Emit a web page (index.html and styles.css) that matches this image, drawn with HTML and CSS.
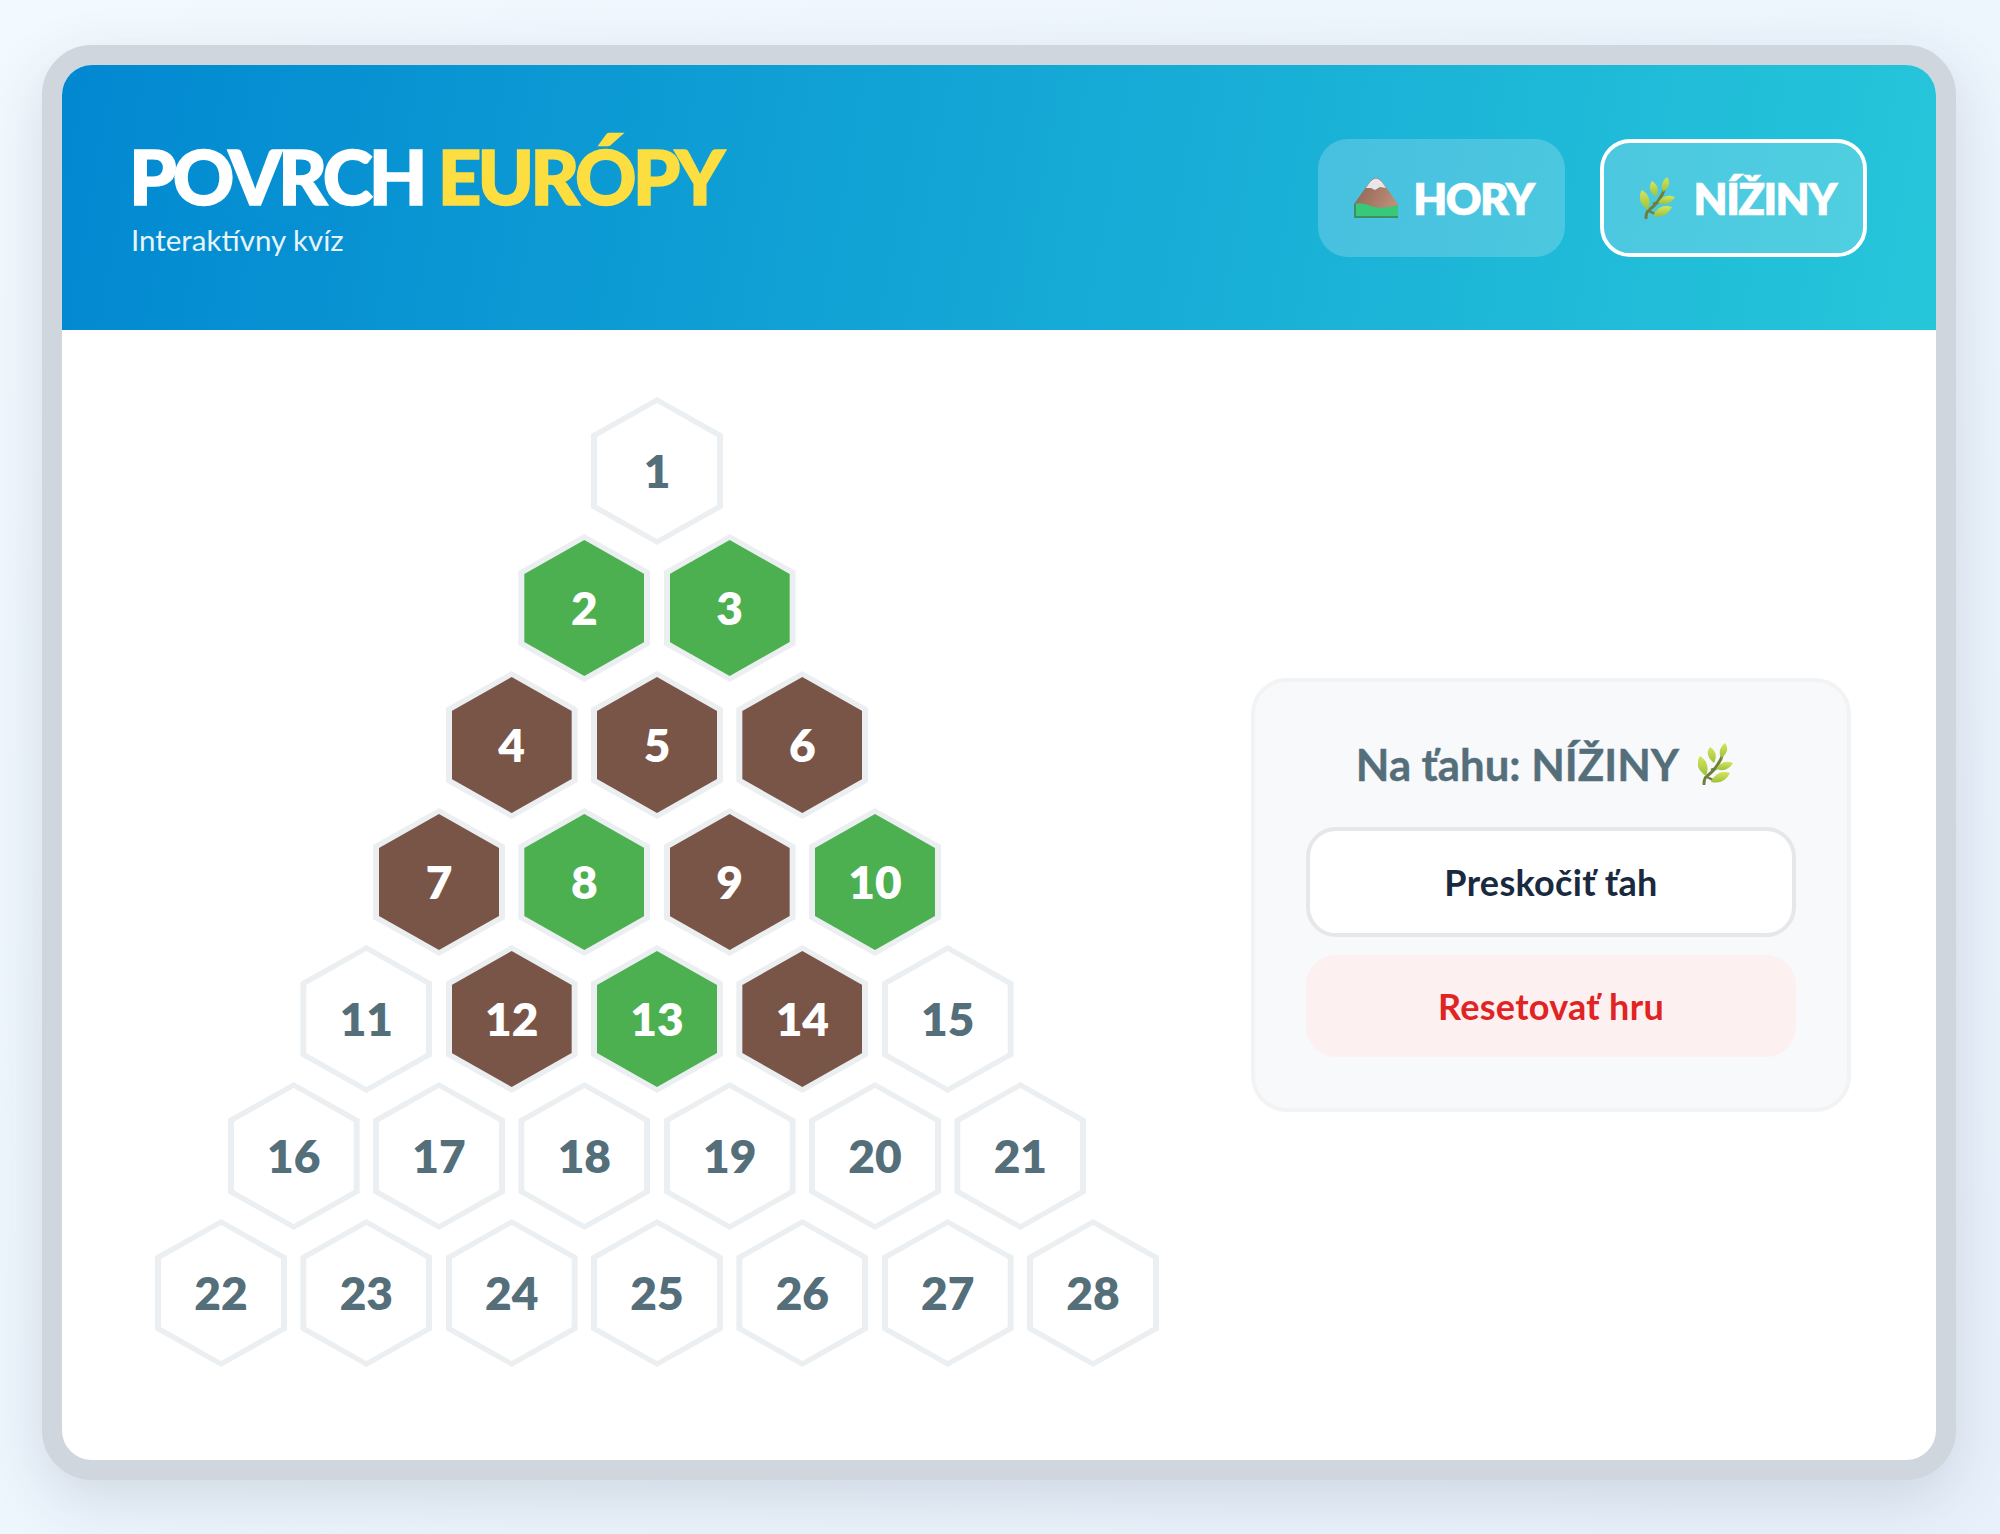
FILE: index.html
```html
<!DOCTYPE html>
<html lang="sk">
<head>
    <meta charset="UTF-8">
    <meta name="viewport" content="width=device-width, initial-scale=1.0">
    <title>Povrch Európy</title>
    <link rel="stylesheet" href="styles.css">
</head>
<body>
    <svg class="icon-defs" width="0" height="0" aria-hidden="true">
        <defs>
            <linearGradient id="rock" x1="0" y1="0" x2="1" y2="0.4">
                <stop offset="0" stop-color="#8a6250"/>
                <stop offset="1" stop-color="#bd8d78"/>
            </linearGradient>
            <linearGradient id="leaf" x1="0" y1="0" x2="0" y2="1">
                <stop offset="0" stop-color="#d6e45c"/>
                <stop offset="1" stop-color="#9cc23e"/>
            </linearGradient>
            <symbol id="mountain" viewBox="0 0 44 42">
                <path d="M0 27 L15 6 Q22 -4 29 6 L44 27 V41 H0 Z" fill="url(#rock)"/>
                <path d="M14 8 Q22 -5 30 8 L32 11 L26 10 L21 13 L17 11 L12 11 Z" fill="#e9e6e9"/>
                <path d="M0 27 Q8 25 17 29 T44 28 V41 H0 Z" fill="#37c879"/>
                <path d="M0 27 V41 H44 V39 H2 V27 Z" fill="#3f8f64"/>
            </symbol>
            <symbol id="sprig" viewBox="0 0 36 42">
                <path d="M6 41 Q6 35 9 33 Q17 27 20 21 Q23 17 24 13" fill="none" stroke="#6f7f3a" stroke-width="3" stroke-linecap="round"/>
                <path d="M13 27 L19 25 M9 34 L15 37" fill="none" stroke="#6f7f3a" stroke-width="2.4"/>
                <path d="M8 33 Q-5 24 2 13 Q13 20 8 33 Z" fill="url(#leaf)"/>
                <path d="M16 20 Q6 12 12 4 Q21 10 16 20 Z" fill="url(#leaf)"/>
                <path d="M23 15 Q19 6 27 0 Q33 8 23 15 Z" fill="url(#leaf)"/>
                <path d="M18 26 Q24 16 35 20 Q29 30 18 26 Z" fill="url(#leaf)"/>
                <path d="M13 39 Q19 26 32 30 Q26 42 13 39 Z" fill="url(#leaf)"/>
            </symbol>
        </defs>
    </svg>

    <div class="game">
        <header class="game-header">
            <div class="brand">
                <h1 class="brand-title">POVRCH <span class="brand-accent">EURÓPY</span></h1>
                <p class="brand-sub">Interaktívny kvíz</p>
            </div>
            <div class="teams">
                <div class="team">
                    <svg class="team-icon icon-mountain"><use href="#mountain"/></svg>
                    HORY
                </div>
                <div class="team team-active">
                    <svg class="team-icon icon-sprig"><use href="#sprig"/></svg>
                    NÍŽINY
                </div>
            </div>
        </header>

        <main class="game-main">
            <div class="board">
                <div class="hex-row">
                    <div class="hex"><span>1</span></div>
                </div>
                <div class="hex-row">
                    <div class="hex hex-green"><span>2</span></div>
                    <div class="hex hex-green"><span>3</span></div>
                </div>
                <div class="hex-row">
                    <div class="hex hex-brown"><span>4</span></div>
                    <div class="hex hex-brown"><span>5</span></div>
                    <div class="hex hex-brown"><span>6</span></div>
                </div>
                <div class="hex-row">
                    <div class="hex hex-brown"><span>7</span></div>
                    <div class="hex hex-green"><span>8</span></div>
                    <div class="hex hex-brown"><span>9</span></div>
                    <div class="hex hex-green"><span>10</span></div>
                </div>
                <div class="hex-row">
                    <div class="hex"><span>11</span></div>
                    <div class="hex hex-brown"><span>12</span></div>
                    <div class="hex hex-green"><span>13</span></div>
                    <div class="hex hex-brown"><span>14</span></div>
                    <div class="hex"><span>15</span></div>
                </div>
                <div class="hex-row">
                    <div class="hex"><span>16</span></div>
                    <div class="hex"><span>17</span></div>
                    <div class="hex"><span>18</span></div>
                    <div class="hex"><span>19</span></div>
                    <div class="hex"><span>20</span></div>
                    <div class="hex"><span>21</span></div>
                </div>
                <div class="hex-row">
                    <div class="hex"><span>22</span></div>
                    <div class="hex"><span>23</span></div>
                    <div class="hex"><span>24</span></div>
                    <div class="hex"><span>25</span></div>
                    <div class="hex"><span>26</span></div>
                    <div class="hex"><span>27</span></div>
                    <div class="hex"><span>28</span></div>
                </div>
            </div>

            <aside class="panel">
                <div class="turn">
                    Na ťahu: NÍŽINY
                    <svg class="turn-icon"><use href="#sprig"/></svg>
                </div>
                <button class="btn btn-skip">Preskočiť ťah</button>
                <button class="btn btn-reset">Resetovať hru</button>
            </aside>
        </main>
    </div>
</body>
</html>
```

FILE: styles.css
```css
* {
    margin: 0;
    padding: 0;
    box-sizing: border-box;
}

body {
    font-family: 'Lato', 'Noto Sans', sans-serif;
    background: linear-gradient(135deg, #f2f9ff 0%, #e8f1fb 100%);
    width: 2000px;
    height: 1534px;
    display: flex;
    align-items: flex-start;
    justify-content: center;
    padding: 45px 2px 0 0;
    overflow: hidden;
}

.icon-defs {
    position: absolute;
}

.game {
    width: 1914px;
    height: 1435px;
    background: #fff;
    border: 20px solid #cfd6dd;
    border-radius: 50px;
    box-shadow: 0 20px 60px rgba(44, 62, 80, 0.15);
    display: flex;
    flex-direction: column;
    overflow: hidden;
}

/* header */
.game-header {
    height: 265px;
    flex-shrink: 0;
    padding: 0 69px 0 67px;
    display: flex;
    align-items: center;
    justify-content: space-between;
    background: linear-gradient(100deg, #0288d1 0%, #26c6da 100%);
    color: #fff;
}

.brand-title {
    font-size: 76px;
    font-weight: 900;
    line-height: 1;
    letter-spacing: -3.9px;
    -webkit-text-stroke: 1.6px currentColor;
}

.brand-accent {
    color: #fdde40;
}

.brand-sub {
    font-size: 29.5px;
    font-weight: 400;
    line-height: 36px;
    margin-top: 8px;
    padding-left: 2px;
    opacity: 0.9;
}

.teams {
    display: flex;
    gap: 35px;
}

.team {
    height: 118px;
    padding: 0 27px 0 32px;
    display: flex;
    align-items: center;
    gap: 15px;
    border: 4px solid transparent;
    border-radius: 30px;
    background: rgba(255, 255, 255, 0.2);
    background-clip: padding-box;
    font-size: 44px;
    font-weight: 800;
    letter-spacing: -1.6px;
    -webkit-text-stroke: 0.5px currentColor;
}

.team:first-child {
    background-clip: border-box;
}

.team-active {
    border-color: #fff;
    gap: 18px;
    padding-left: 36px;
}

.team-icon {
    flex-shrink: 0;
}

.icon-mountain {
    width: 44px;
    height: 42px;
}

.icon-sprig {
    width: 36px;
    height: 42px;
}

/* board */
.game-main {
    flex: 1;
    padding: 0 85px;
    display: flex;
    align-items: center;
    gap: 84px;
}

.board {
    flex: 1;
    padding-bottom: 26px;
}

.hex-row {
    display: flex;
    justify-content: center;
    gap: 13.33px;
    margin-top: -11px;
}

.hex-row:first-child {
    margin-top: 0;
}

.hex {
    width: 132px;
    height: 148px;
    padding: 6px;
    background: #eceff1;
    clip-path: polygon(50% 0, 100% 25%, 100% 75%, 50% 100%, 0 75%, 0 25%);
    color: #546e7a;
    font-size: 46px;
    font-weight: 800;
}

.hex span {
    display: flex;
    align-items: center;
    justify-content: center;
    height: 100%;
    padding-bottom: 2px;
    background: #fff;
    clip-path: polygon(50% 0, 100% 25%, 100% 75%, 50% 100%, 0 75%, 0 25%);
}

.hex-green span {
    background: #4caf50;
    color: #fff;
}

.hex-brown span {
    background: #795548;
    color: #fff;
}

/* side panel */
.panel {
    width: 600px;
    height: 434px;
    flex-shrink: 0;
    padding: 0 51px;
    background: #f8f9fb;
    border: 4px solid #f1f3f5;
    border-radius: 36px;
}

.turn {
    height: 145px;
    padding: 18px 12px 0 0;
    display: flex;
    align-items: center;
    justify-content: center;
    gap: 19px;
    color: #546e7a;
    font-size: 43.7px;
    font-weight: 700;
    -webkit-text-stroke: 0.4px currentColor;
}

.turn-icon {
    width: 36px;
    height: 42px;
}

.btn {
    display: block;
    width: 100%;
    border-radius: 30px;
    font-family: inherit;
    font-size: 36px;
    font-weight: 700;
    letter-spacing: 0.3px;
}

.btn-skip {
    height: 110px;
    background: #fff;
    border: 4px solid #e5e7eb;
    color: #1a2a3e;
}

.btn-reset {
    height: 102px;
    margin-top: 18px;
    background: #fdf0f1;
    border: none;
    color: #e02424;
}
```
